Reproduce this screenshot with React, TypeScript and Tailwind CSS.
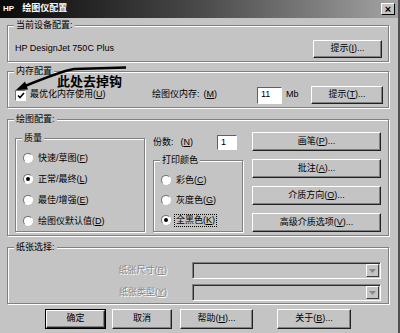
import React from "react";

const FONT = "font-['Liberation_Sans','Noto_Sans_CJK_SC',sans-serif]";

function U({ k }: { k: string }) {
  return (
    <>
      (<span className="underline">{k}</span>)
    </>
  );
}

function Btn({
  children,
  className = "",
  def = false,
}: {
  children: React.ReactNode;
  className?: string;
  def?: boolean;
}) {
  return (
    <div className={`${def ? "border border-black" : ""} ${className}`}>
      <div className="flex h-full w-full items-center justify-center whitespace-nowrap border border-t-white border-l-white border-r-[#202020] border-b-[#202020] shadow-[inset_-1px_-1px_0_#808080]">
        {children}
      </div>
    </div>
  );
}

function Group({
  label,
  className = "",
  children,
}: {
  label: React.ReactNode;
  className?: string;
  children?: React.ReactNode;
}) {
  return (
    <div
      className={`relative border border-[#808080] shadow-[inset_1px_1px_0_#fff,1px_1px_0_#fff] ${className}`}
    >
      <span className="absolute left-[6px] top-[-6px] bg-[#c4c4c4] px-[2px] leading-[11px]">
        {label}
      </span>
      {children}
    </div>
  );
}

function Radio({
  label,
  checked = false,
  focus = false,
}: {
  label: React.ReactNode;
  checked?: boolean;
  focus?: boolean;
}) {
  return (
    <div className="flex h-[12px] items-center">
      <span className="flex h-[10px] w-[10px] items-center justify-center rounded-full border border-t-[#707070] border-l-[#707070] border-r-white border-b-white bg-white">
        {checked && <span className="h-[4px] w-[4px] rounded-full bg-black" />}
      </span>
      <span
        className={`ml-[4px] px-[1px] leading-[11px] ${
          focus ? "outline outline-1 outline-dotted outline-black" : ""
        }`}
      >
        {label}
      </span>
    </div>
  );
}

function Combo() {
  return (
    <div className="flex h-[17px] w-[189px] items-center justify-end border border-t-[#808080] border-l-[#808080] border-r-white border-b-white pr-[1px] shadow-[inset_1px_1px_0_#303030]">
      <div className="flex h-[13px] w-[13px] items-center justify-center border border-t-white border-l-white border-r-[#404040] border-b-[#404040]">
        <svg width="7" height="4" viewBox="0 0 7 4">
          <polygon points="0,0 7,0 3.5,4" fill="#8a8a8a" />
        </svg>
      </div>
    </div>
  );
}

const dim = "text-[#8a8a8a] [text-shadow:1px_1px_0_#fff]";

export default function App() {
  return (
    <div
      className={`relative h-[333px] w-[400px] overflow-hidden border-r-2 border-r-[#505050] bg-[#c4c4c4] text-[9px] text-black ${FONT}`}
    >
      {/* title bar */}
      <div className="flex h-[18px] items-center bg-linear-to-r from-[#0a0a0a] via-[#4a4a4a] to-[#a4a4a4] pl-[3px] pr-[3px] font-bold text-white">
        <span className="text-[8px]">HP</span>
        <span className="ml-[8px]">绘图仪配置</span>
        <div className="ml-auto flex h-[12px] w-[14px] items-center justify-center border border-t-white border-l-white border-r-black border-b-black bg-[#c4c4c4] text-[11px] leading-none text-black">
          ×
        </div>
      </div>

      <div className="px-[7px]">
        <Group label="当前设备配置:" className="mt-[7px] h-[37px] w-[382px]">
          <div className="flex items-center pt-[14px]">
            <span className="ml-[7px]">HP DesignJet 750C Plus</span>
            <Btn className="ml-auto mr-[6px] h-[18px] w-[69px]">
              提示<U k="I" />...
            </Btn>
          </div>
        </Group>

        <Group label="内存配置" className="mt-[9px] h-[37px] w-[382px]">
          <div className="flex items-center pt-[14px]">
            <div className="flex w-[144px] items-center pl-[7px]">
              <span className="flex h-[11px] w-[11px] items-center justify-center border border-t-[#707070] border-l-[#707070] border-r-white border-b-white bg-white">
                <svg width="8" height="7" viewBox="0 0 8 7">
                  <path d="M1 3.5 L3 5.5 L7 1" stroke="#000" strokeWidth="1.6" fill="none" />
                </svg>
              </span>
              <span className="ml-[4px]">
                最优化内存使用<U k="U" />
              </span>
            </div>
            <div className="flex w-[105px] items-center">
              <span>绘图仪内存:</span>
              <span className="ml-[4px]">
                <U k="M" />
              </span>
            </div>
            <div className="flex h-[17px] w-[25px] items-center border border-t-[#606060] border-l-[#606060] border-r-white border-b-white bg-white pl-[3px]">
              11
            </div>
            <span className="ml-[4px]">Mb</span>
            <Btn className="ml-auto mr-[5px] h-[18px] w-[72px]">
              提示<U k="T" />...
            </Btn>
          </div>
        </Group>

        <Group label="绘图配置:" className="mt-[11px] h-[117px] w-[382px]">
          <div className="flex pl-[7px] pt-[12px]">
            <Group label="质量" className="mt-[6px] h-[94px] w-[130px]">
              <div className="flex flex-col gap-[9px] pl-[7px] pt-[13px]">
                <Radio label={<>快速/草图<U k="F" /></>} />
                <Radio label={<>正常/最终<U k="L" /></>} checked />
                <Radio label={<>最佳/增强<U k="E" /></>} />
                <Radio label={<>绘图仪默认值<U k="D" /></>} />
              </div>
            </Group>

            <div className="ml-[8px] w-[90px]">
              <div className="mt-[3px] flex h-[15px] items-center">
                <span>份数:</span>
                <span className="ml-[7px]">
                  <U k="N" />
                </span>
                <div className="ml-auto mr-[6px] flex h-[15px] w-[20px] items-center border border-t-[#606060] border-l-[#606060] border-r-white border-b-white bg-white pl-[3px]">
                  1
                </div>
              </div>
              <Group label="打印颜色" className="mt-[10px] h-[72px] w-[90px]">
                <div className="flex flex-col gap-[8px] pl-[7px] pt-[13px]">
                  <Radio label={<>彩色<U k="C" /></>} />
                  <Radio label={<>灰度色<U k="G" /></>} />
                  <Radio label={<>全黑色<U k="K" /></>} checked focus />
                </div>
              </Group>
            </div>

            <div className="ml-[9px] flex w-[129px] flex-col gap-[8px]">
              <Btn className="h-[19px]">
                画笔<U k="P" />...
              </Btn>
              <Btn className="h-[19px]">
                批注<U k="A" />...
              </Btn>
              <Btn className="h-[19px]">
                介质方向<U k="O" />...
              </Btn>
              <Btn className="h-[19px]">
                高级介质选项<U k="V" />...
              </Btn>
            </div>
          </div>
        </Group>

        <Group label="纸张选择:" className="mt-[11px] h-[57px] w-[382px]">
          <div className="flex flex-col gap-[5px] pt-[14px]">
            <div className="flex items-center">
              <span className={`w-[159px] text-right ${dim}`}>
                纸张尺寸<U k="R" />
              </span>
              <span className="ml-[25px]">
                <Combo />
              </span>
            </div>
            <div className="flex items-center">
              <span className={`w-[159px] text-right ${dim}`}>
                纸张类型<U k="Y" />
              </span>
              <span className="ml-[25px]">
                <Combo />
              </span>
            </div>
          </div>
        </Group>

        <div className="mt-[5px] flex">
          <Btn def className="ml-[38px] h-[20px] w-[61px]">
            确定
          </Btn>
          <Btn className="ml-[6px] h-[20px] w-[60px]">取消</Btn>
          <Btn className="ml-[8px] h-[20px] w-[73px]">
            帮助<U k="H" />...
          </Btn>
          <Btn className="ml-[24px] h-[20px] w-[74px]">
            关于<U k="B" />...
          </Btn>
        </div>
      </div>

      {/* hand-drawn annotation over the dialog */}
      <svg
        className="pointer-events-none absolute left-0 top-0"
        width="400"
        height="333"
        viewBox="0 0 400 333"
      >
        <path
          d="M126 67.5 L74 69 Q62 71 25 86"
          stroke="#000"
          strokeWidth="2.5"
          fill="none"
        />
        <polygon points="16,90 28,89.5 25,81.5" fill="#000" />
      </svg>
      <span className="absolute left-[57px] top-[75px] text-[13px] font-bold leading-none text-black">
        此处去掉钩
      </span>
    </div>
  );
}
